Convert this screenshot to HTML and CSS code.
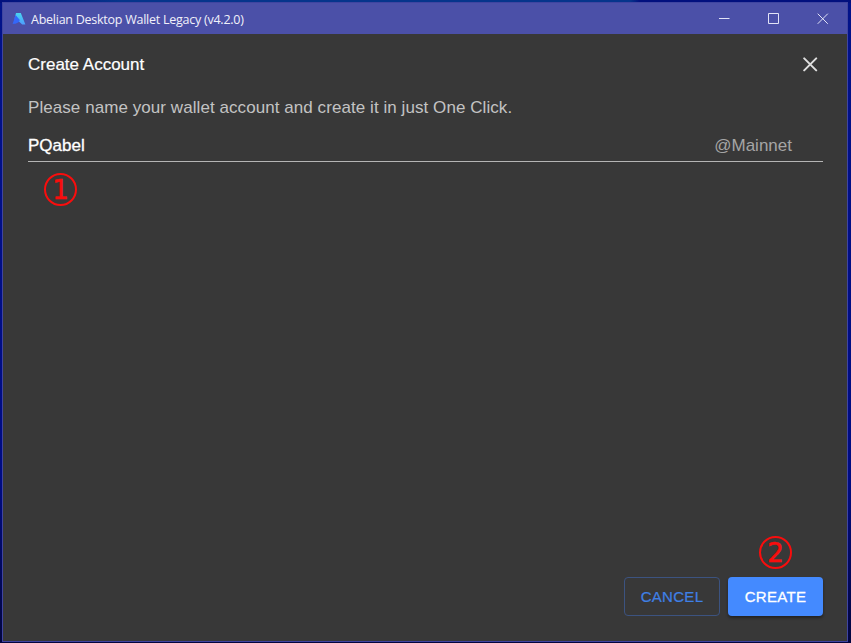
FILE: index.html
```html
<!DOCTYPE html>
<html lang="en">
<head>
<meta charset="utf-8">
<title>Abelian Desktop Wallet Legacy</title>
<link rel="stylesheet" href="styles.css">
</head>
<body>
<div class="window">
  <header class="titlebar">
    <svg class="logo" viewBox="0 0 14 14">
      <defs>
        <linearGradient id="lg" x1="0" y1="0" x2="0" y2="1"><stop offset="0" stop-color="#48d6ef"/><stop offset="1" stop-color="#4e9cff"/></linearGradient>
      </defs>
      <path d="M4 1 H8.8 L13.4 12.6 H10.2 L7 9.6 L2.6 6.4 Z" fill="url(#lg)"/>
      <path d="M3.6 3 L7.8 8 C7.6 10.4 4.5 11.8 .6 12 Z" fill="#3468fa"/>
    </svg>
    <span class="app-name">Abelian Desktop Wallet Legacy (v4.2.0)</span>
    <div class="controls">
      <svg viewBox="0 0 12 12"><path d="M0 5.5H10.5"/></svg>
      <svg viewBox="0 0 12 12"><path d="M.5 .5H10.5V10.5H.5Z"/></svg>
      <svg viewBox="0 0 12 12"><path d="M.7 .7L10.8 10.8M10.8 .7L.7 10.8"/></svg>
    </div>
  </header>
  <main class="dialog">
    <div class="heading">
      <h1>Create Account</h1>
      <svg class="close" viewBox="0 0 16 16"><path d="M2.2 1.4L14.2 13.4M14.2 1.4L2.2 13.4"/></svg>
    </div>
    <p class="description">Please name your wallet account and create it in just One Click.</p>
    <div class="field">
      <span class="value">PQabel</span>
      <span class="suffix">@Mainnet</span>
    </div>
    <div class="step step-one"><span>1</span></div>
    <div class="bottom">
      <div class="step step-two"><span>2</span></div>
      <div class="actions">
        <button class="cancel">CANCEL</button>
        <button class="create">CREATE</button>
      </div>
    </div>
  </main>
</div>
</body>
</html>
```
FILE: styles.css
```css
* { box-sizing: border-box; }
body {
  margin: 0;
  height: 643px;
  padding: 2px 2px 1px;
  overflow: hidden;
  background: linear-gradient(90deg, #02107e 0, #06358c 120px, #06358c 630px, #02107e 640px) top / 100% 3px no-repeat, linear-gradient(#02138a, #000c82 75%, #03063f);
  font-family: "Liberation Sans", Arial, sans-serif;
}
.window {
  width: 846px;
  height: 640px;
  border: 1px solid #4045a0;
  display: flex;
  flex-direction: column;
  background: #383838;
}
.titlebar {
  height: 31px;
  flex: none;
  display: flex;
  align-items: center;
  padding: 1px 18px 0 9px;
  background: #4b50a8;
  color: #f1f1fa;
}
.logo { width: 14px; height: 14px; margin-right: 5px; }
.app-name { padding-top: 2px; font: 12.5px/28px "Open Sans", "Noto Sans", sans-serif; letter-spacing: -.25px; white-space: nowrap; }
.controls { margin-left: auto; display: flex; gap: 37px; }
.controls svg { width: 12px; height: 12px; fill: none; stroke: #e2e3f6; }
.dialog { flex: 1; display: flex; flex-direction: column; padding: 0 24px 25px 25px; }
.heading { height: 61px; display: flex; justify-content: space-between; align-items: center; }
h1 { margin: 0; padding-top: 1px; font-size: 17px; font-weight: 400; color: #fff; -webkit-text-stroke: .2px #fff; }
.close { width: 16px; height: 16px; margin-right: 5px; fill: none; stroke: #dedede; stroke-width: 2; stroke-linecap: round; }
.description { margin: 0; height: 26px; line-height: 26px; font-size: 17px; letter-spacing: .065px; color: #c3c3c3; white-space: nowrap; }
.field { height: 41px; border-bottom: 1px solid #b5b5b5; padding: 11px 31px 0 0; display: flex; justify-content: space-between; font-size: 17px; line-height: 28px; }
.value { color: #fff; -webkit-text-stroke: .3px #fff; }
.suffix { color: #a5a5a5; }
.step {
  width: 33px;
  height: 33px;
  border: 2px solid #f90d0d;
  border-radius: 50%;
  display: flex;
  align-items: center;
  justify-content: center;
  padding-top: 2px;
  font: 26px/27px "DejaVu Sans", sans-serif;
  color: #f90d0d;
  -webkit-text-stroke: .5px #f90d0d;
}
.step-one { margin: 11px 0 0 16px; }
.bottom { margin-top: auto; display: flex; flex-direction: column; align-items: flex-end; }
.step-two { margin: 0 31px 8px 0; }
.actions { display: flex; gap: 8px; }
button { height: 39px; border-radius: 4px; padding: 0; font: 15px "Liberation Sans", Arial, sans-serif; letter-spacing: .3px; }
.cancel { width: 96px; border: 1px solid #3c5380; background: transparent; color: #3f80e6; -webkit-text-stroke: .2px #3f80e6; }
.create { width: 95px; border: 0; background: #448aff; color: #fff; box-shadow: 0 2px 3px rgba(0, 0, 0, .4); -webkit-text-stroke: .3px #fff; }
```
